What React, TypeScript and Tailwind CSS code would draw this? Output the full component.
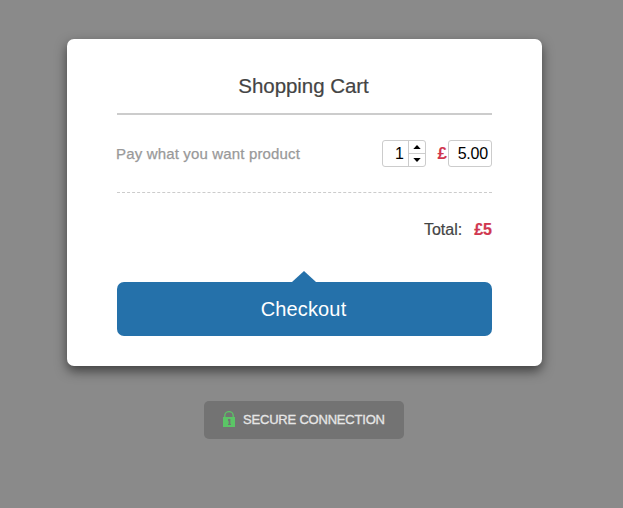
import type { ReactNode } from 'react';

interface CartItem {
  name: string;
  quantity: number;
  price: string;
}

const item: CartItem = { name: 'Pay what you want product', quantity: 1, price: '5.00' };

function LockIcon() {
  return (
    <svg className="mb-0.5 h-4 w-3 shrink-0" viewBox="0 0 12 16">
      <path d="M1.8 7V4.6a4.2 4 0 0 1 8.4 0V7" fill="none" stroke="#5bc566" strokeWidth="1.3" />
      <path
        fillRule="evenodd"
        fill="#5bc566"
        d="M0 6h12v10H0zM5 8v2h.6v3H5v1h3v-1h-.6V8z"
      />
    </svg>
  );
}

function QuantityStepper({ quantity }: { quantity: number }) {
  return (
    <div className="flex h-[27px] w-[44px] overflow-hidden rounded-[3px] border border-[#ccc]">
      <span className="w-[26px] shrink-0 border-r border-[#ccc] pr-1 text-right text-base leading-[26px] text-black">
        {quantity}
      </span>
      <div className="flex flex-1 flex-col">
        <button className="flex h-[13px] items-center justify-center border-b border-[#ccc]">
          <svg className="h-1 w-2" viewBox="0 0 8 4">
            <path d="M0.3 4L4 0l3.7 4z" />
          </svg>
        </button>
        <button className="flex h-3 items-center justify-center">
          <svg className="h-1 w-2" viewBox="0 0 8 4">
            <path d="M0.3 0L4 4l3.7-4z" />
          </svg>
        </button>
      </div>
    </div>
  );
}

function Card({ children }: { children: ReactNode }) {
  return (
    <main className="h-[327px] w-[475px] rounded-[7px] bg-white px-[50px] shadow-[0_5px_12px_rgba(0,0,0,0.55)]">
      {children}
    </main>
  );
}

export default function App() {
  return (
    <div className="flex h-[508px] w-[623px] flex-col items-center bg-[#8a8a8a] pt-[39px] pr-[14px] font-['Liberation_Sans',Arial,sans-serif] text-[#444]">
      <Card>
        <h1 className="h-[76px] border-b-2 border-[#ccc] pt-8 pr-[2px] text-center text-[20.5px] leading-[30px] tracking-[-0.06px] [-webkit-text-stroke:0.2px]">
          Shopping Cart
        </h1>

        <div className="flex h-[78px] items-center border-b border-dashed border-[#ccc]">
          <span className="-ml-px flex-1 text-[15px] leading-5 tracking-[0.16px] text-[#999] [-webkit-text-stroke:0.25px]">
            {item.name}
          </span>
          <QuantityStepper quantity={item.quantity} />
          <span className="w-[22px] pr-px text-right text-[17px] font-bold text-[#d0374f]">£</span>
          <span className="h-[27px] w-[44px] rounded-[3px] border border-[#ccc] pr-[3px] text-right text-base leading-[26px] tracking-[-0.2px] text-black">
            {item.price}
          </span>
        </div>

        <div className="flex h-[89px] justify-end gap-3 pt-[27px] text-base leading-5">
          <span className="[-webkit-text-stroke:0.2px]">Total:</span>
          <strong className="text-[#d0374f] [-webkit-text-stroke:0.2px]">£5</strong>
        </div>

        <button className="relative h-[54px] w-full rounded-[7px] bg-[#2571aa] pr-[2px] text-xl tracking-[0.15px] text-white">
          <svg className="absolute -top-[11px] left-[175px] h-3 w-6" viewBox="0 0 24 12">
            <path d="M-1 12L12 0l13 12z" fill="#2571aa" />
          </svg>
          Checkout
        </button>
      </Card>

      <div className="mt-[35px] mr-px flex h-[38px] w-[200px] items-center gap-2 rounded-[5px] bg-[#737373] pl-[19px] text-[13px] tracking-[-0.2px] text-[#e6e6e6]">
        <LockIcon />
        <span className="[-webkit-text-stroke:0.3px]">SECURE CONNECTION</span>
      </div>
    </div>
  );
}
